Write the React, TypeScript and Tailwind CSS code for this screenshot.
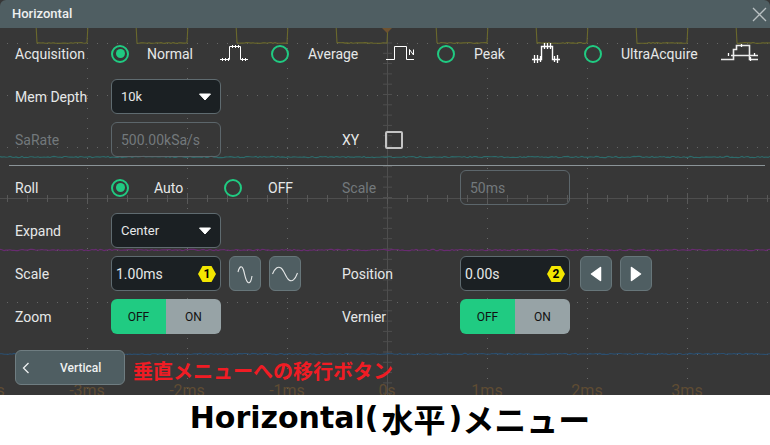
import React from "react";

const noise = (i: number, seed: number) => {
  const s = Math.sin(i * 12.9898 + seed * 78.233) * 43758.5453;
  return (s - Math.floor(s) - 0.5) * 1.3;
};

const flat = (y: number, seed: number) => {
  const p: string[] = [];
  for (let x = 0; x <= 770; x += 2) p.push(`${x},${(y + noise(x, seed)).toFixed(1)}`);
  return p.join(" ");
};

const square = () => {
  const p: string[] = [];
  for (let k = 0; k < 8; k++) {
    const a = 37 + k * 100;
    p.push(`${a - 1},24`);
    for (let x = a; x <= a + 50; x += 2) p.push(`${x},${(43 + noise(x, 4) * 0.7).toFixed(1)}`);
    p.push(`${a + 51},24`);
  }
  return p.join(" ");
};

function Scope() {
  const vx = [87, 187, 287, 487, 587, 687];
  const hy = [43, 95, 147, 250, 302, 354];
  const ticks: number[] = [];
  for (let x = 7; x < 770; x += 20) ticks.push(x);
  const vticks: number[] = [];
  for (let y = 43; y < 395; y += 10.3) vticks.push(y);
  const labels: [number, string][] = [[-13, "-4ms"], [87, "-3ms"], [187, "-2ms"], [287, "-1ms"], [387, "0s"], [487, "1ms"], [587, "2ms"], [687, "3ms"]];
  return (
    <svg className="absolute inset-0" width="770" height="395" viewBox="0 0 770 395">
      {vx.map((x) => <line key={x} x1={x + 0.5} y1="28" x2={x + 0.5} y2="395" stroke="#666" strokeDasharray="1 9" />)}
      {hy.map((y) => <line key={y} x1="7" y1={y + 0.5} x2="770" y2={y + 0.5} stroke="#666" strokeDasharray="1 9" />)}
      <line x1="0" y1="198.5" x2="770" y2="198.5" stroke="#4e4e4e" />
      <line x1="387.5" y1="28" x2="387.5" y2="395" stroke="#4e4e4e" />
      {ticks.map((x) => <line key={x} x1={x + 0.5} y1={x % 100 === 87 ? 193 : 195} x2={x + 0.5} y2={x % 100 === 87 ? 204 : 202} stroke="#585858" />)}
      {vticks.map((y) => <line key={y} x1="383" y1={y} x2="392" y2={y} stroke="#4e4e4e" />)}
      <polyline points={square()} fill="none" stroke="#6b692c" strokeWidth="1.1" />
      <polyline points={flat(157, 1)} fill="none" stroke="#2d6b6b" strokeWidth="1.1" />
      <polyline points={flat(250, 2)} fill="none" stroke="#682c70" strokeWidth="1.1" />
      <polyline points={flat(354, 3)} fill="none" stroke="#2b4f70" strokeWidth="1.1" />
      <polygon points="382,28 392,28 387,33" fill="#6e5230" />
      {labels.map(([x, t]) => (
        <text key={t} x={x} y="396" textAnchor="middle" fontSize="16" fontFamily="Roboto, sans-serif" fill="#5f4c33">{t}</text>
      ))}
    </svg>
  );
}

function Radio({ on = false }: { on?: boolean }) {
  return (
    <span className="flex h-[18px] w-[18px] shrink-0 items-center justify-center rounded-full border-2 border-[#20cb82]">
      {on && <span className="h-[9px] w-[9px] rounded-full bg-[#20cb82]" />}
    </span>
  );
}

const Lab = ({ children, dim = false, w = "w-[96px]" }: { children: React.ReactNode; dim?: boolean; w?: string }) => (
  <span className={`${w} shrink-0 pt-[2px] text-[14px] ${dim ? "text-[#73797c]" : "text-[#e6e8e8]"}`}>{children}</span>
);

function Caret() {
  return (
    <svg width="14" height="8" viewBox="0 0 14 8" className="shrink-0">
      <path d="M1.5 1 H12.5 L7 7 Z" fill="#fff" stroke="#fff" strokeWidth="1" strokeLinejoin="round" />
    </svg>
  );
}

function Select({ v }: { v: string }) {
  return (
    <div className="flex h-[35px] w-[110px] shrink-0 items-center justify-between rounded-md border border-[#5f6b70] bg-[#1b2023] pl-[9px] pr-[8px] text-[13px] text-[#e6e8e8]">
      {v}
      <Caret />
    </div>
  );
}

function Disabled({ v, extra = "pl-[9px]" }: { v: string; extra?: string }) {
  return (
    <div className={`flex h-[35px] w-[110px] shrink-0 items-center rounded-md border border-[#5c666b] ${extra} pt-[2px] text-[14px] text-[#73797c]`}>{v}</div>
  );
}

function Hex({ n }: { n: string }) {
  return (
    <span className="relative flex h-[16px] w-[18px] shrink-0 items-center justify-center text-[12px] font-bold text-black">
      <svg className="absolute inset-0" width="18" height="16" viewBox="0 0 18 16">
        <polygon points="0,8 4.5,0 13.5,0 18,8 13.5,16 4.5,16" fill="#f2e600" />
      </svg>
      <span className="relative">{n}</span>
    </span>
  );
}

function Knob({ v, n }: { v: string; n: string }) {
  return (
    <div className="flex h-[35px] w-[110px] shrink-0 items-center justify-between rounded-md border border-[#5f6b70] bg-[#1b2023] pl-[4px] pr-[4px] text-[14px] text-[#e6e8e8]">
      <span className="pt-[2px]">{v}</span>
      <Hex n={n} />
    </div>
  );
}

function Toggle() {
  return (
    <div className="flex h-[35px] w-[110px] shrink-0 overflow-hidden rounded-md text-[12px] text-[#111]">
      <span className="flex w-[55px] items-center justify-center bg-[#20cb82]">OFF</span>
      <span className="flex w-[55px] items-center justify-center bg-[#97a3a6]">ON</span>
    </div>
  );
}

const Btn = ({ children }: { children: React.ReactNode }) => (
  <div className="flex h-[35px] w-[32px] shrink-0 items-center justify-center rounded-md border border-[#67767a] bg-[#4f5e62]">{children}</div>
);

const W = "#ffffff";
function IcoNormal() {
  return (
    <svg width="28" height="18" viewBox="0 0 28 18" className="shrink-0">
      <path d="M0 14.5H9.5V1.5H20.5V14.5H28" fill="none" stroke={W} />
      <path d="M2.5 13v3M5.5 13v3M8.5 13v3M12.5 0v3M15.5 0v3M18.5 0v3M22.5 13v3M25.5 13v3" stroke={W} />
    </svg>
  );
}
function IcoAvg() {
  return (
    <svg width="28" height="18" viewBox="0 0 28 18" className="shrink-0">
      <path d="M0 14.5H8.5V1.5H20.5V14.5H28" fill="none" stroke={W} />
      <path d="M23.5 10V4.5L27.5 10V4.5" fill="none" stroke={W} />
    </svg>
  );
}
function IcoPeak() {
  return (
    <svg width="28" height="22" viewBox="0 0 28 22" className="shrink-0">
      <path d="M0 16.5H9.5V3.5H20.5V16.5H28" fill="none" stroke={W} strokeWidth="1.4" />
      <path d="M2.5 12v8M5.5 12v8M8.5 13v6M12.5 0v6M15.5 0v6M18.5 0v6M22.5 13v6M25.5 12v8" stroke={W} strokeWidth="1.3" />
    </svg>
  );
}
function IcoUltra() {
  return (
    <svg width="38" height="20" viewBox="0 0 38 20" className="shrink-0">
      <path d="M0 15.5H12.5V5.5H15.5V1.5H28.5V15.5H37M10 11.5H37" fill="none" stroke={W} strokeWidth="1.6" opacity="0.9" />
      <path d="M7.5 9v3M20.5 0v3M29.5 13v4M33.5 9v3" stroke={W} strokeWidth="1.3" />
    </svg>
  );
}

const Row = ({ children }: { children: React.ReactNode }) => (
  <div className="flex h-[35px] items-center">{children}</div>
);

const Tx = ({ cls, children }: { cls: string; children: React.ReactNode }) => (
  <span className={`${cls} shrink-0 pt-[2px] text-[14px] text-[#e6e8e8]`}>{children}</span>
);

export default function App() {
  return (
    <div className="w-[770px] bg-white" style={{ fontFamily: "Roboto, sans-serif" }}>
      <div className="relative h-[395px] overflow-hidden bg-[#373737]">
        <Scope />
        <div className="relative flex h-full flex-col">
          <div className="flex h-[28px] shrink-0 items-center justify-between rounded-t-md bg-[#4f5e62] pl-[12px] pr-[3px]">
            <span className="text-[13px] font-medium text-[#eef0f0]">Horizontal</span>
            <svg width="16" height="16" viewBox="0 0 16 16"><path d="M2 2L15 15M15 2L2 15" stroke="#b9c0c2" strokeWidth="1.3" /></svg>
          </div>

          <div className="flex flex-col gap-[8px] pl-[15px] pt-[8px]">
            <Row>
              <Lab>Acquisition</Lab>
              <Radio on /><Tx cls="ml-[18px] w-[73px]">Normal</Tx><IcoNormal />
              <span className="ml-[23px] flex items-center"><Radio /></span><Tx cls="ml-[19px] w-[78px]">Average</Tx><IcoAvg />
              <span className="ml-[23px] flex items-center"><Radio /></span><Tx cls="ml-[19px] w-[58px]">Peak</Tx><IcoPeak />
              <span className="ml-[24px] flex items-center"><Radio /></span><Tx cls="ml-[19px] w-[100px]">UltraAcquire</Tx><IcoUltra />
            </Row>
            <Row><Lab>Mem Depth</Lab><Select v="10k" /></Row>
            <Row>
              <Lab dim>SaRate</Lab><Disabled v="500.00kSa/s" />
              <Tx cls="ml-[121px] w-[43px]">XY</Tx>
              <span className="h-[18px] w-[18px] rounded-[2px] border-2 border-[#c4c4c4]" />
            </Row>
          </div>

          <div className="ml-[9px] mr-[5px] mb-[4px] mt-[8px] h-px shrink-0 bg-[#8b9498]" />

          <div className="flex flex-col gap-[8px] pl-[15px]">
            <Row>
              <Lab>Roll</Lab>
              <Radio on /><Tx cls="ml-[25px] w-[70px]">Auto</Tx>
              <Radio /><Tx cls="ml-[26px] w-[74px]">OFF</Tx>
              <Lab dim w="w-[118px]">Scale</Lab><Disabled v="50ms" />
            </Row>
            <Row><Lab>Expand</Lab><Select v="Center" /></Row>
            <Row>
              <Lab>Scale</Lab><Knob v="1.00ms" n="1" />
              <span className="ml-[8px] flex gap-[8px]">
                <Btn><svg width="16" height="22" viewBox="0 0 16 22"><path d="M1 9C2.5 3 5 2 6.5 7S8.5 18 11 19.5 14.5 16 15 13" fill="none" stroke="#e6e8e8" strokeWidth="1.1" /></svg></Btn>
                <Btn><svg width="26" height="22" viewBox="0 0 26 22"><path d="M0.5 11C3 5 6 3 9 5S14 15 17 17 23 17 25.5 10" fill="none" stroke="#e6e8e8" strokeWidth="1.1" /></svg></Btn>
              </span>
              <Tx cls="ml-[41px] w-[118px]">Position</Tx>
              <Knob v="0.00s" n="2" />
              <span className="ml-[10px] flex gap-[8px]">
                <Btn><svg width="12" height="16" viewBox="0 0 12 16"><path d="M10.5 1.5V14.5L1.5 8Z" fill="#fff" stroke="#fff" strokeWidth="1.5" strokeLinejoin="round" /></svg></Btn>
                <Btn><svg width="12" height="16" viewBox="0 0 12 16"><path d="M1.5 1.5V14.5L10.5 8Z" fill="#fff" stroke="#fff" strokeWidth="1.5" strokeLinejoin="round" /></svg></Btn>
              </span>
            </Row>
            <Row>
              <Lab>Zoom</Lab><Toggle />
              <Tx cls="ml-[121px] w-[118px]">Vernier</Tx><Toggle />
            </Row>
            <div className="mt-[8px] flex h-[35px] w-[110px] items-center rounded-md border border-[#6f7d81] bg-[#4f5e62] pl-[6px] text-[12px] font-medium text-[#eef0f0]">
              <svg width="8" height="12" viewBox="0 0 8 12" className="shrink-0"><path d="M6.5 1L1.5 6L6.5 11" fill="none" stroke="#eef0f0" strokeWidth="1.3" /></svg>
              <span className="ml-[30px]">Vertical</span>
            </div>
          </div>
        </div>
        <span className="absolute left-[133px] top-[361px] whitespace-nowrap text-[20px] font-bold leading-[20px] text-[#f01c24]" style={{ fontFamily: '"Noto Sans CJK JP", sans-serif' }}>垂直メニューへの移行ボタン</span>
      </div>
      <div className="flex h-[50px] items-center justify-center pb-[4px] pl-[10px] text-[30px] font-bold leading-none text-black" style={{ fontFamily: '"DejaVu Sans", "Noto Sans CJK JP", sans-serif' }}>
        <span>Horizontal(</span><span className="mx-[3px] text-[32px]" style={{ fontFamily: '"Noto Sans CJK JP", sans-serif' }}>水平</span><span>)</span><span className="text-[32px]" style={{ fontFamily: '"Noto Sans CJK JP", sans-serif' }}>メニュー</span>
      </div>
    </div>
  );
}
